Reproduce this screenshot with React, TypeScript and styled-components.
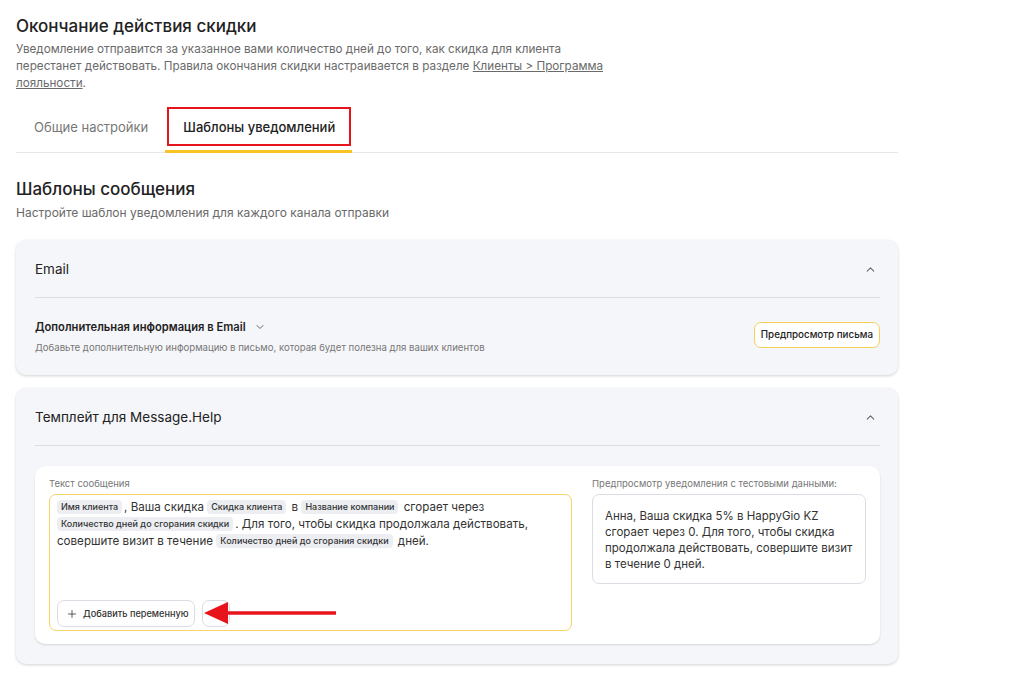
import React from "react";
import styled, { createGlobalStyle } from "styled-components";
import { ChevronUp, ChevronDown, Plus } from "lucide-react";

const Global = createGlobalStyle`
  html, body { margin: 0; padding: 0; background: #fff; }
  body { font-family: Inter, "Noto Sans", sans-serif; color: #222; -webkit-font-smoothing: antialiased; }
  * { box-sizing: border-box; }
`;

const Page = styled.div`
  width: 882px;
  margin-left: 16px;
  padding-top: 15px;
  padding-bottom: 13px;
`;

const Title = styled.h1`
  margin: 0;
  font-size: 17px;
  font-weight: 500;
  line-height: 22px;
  color: #222;
`;

const Desc = styled.p`
  margin: 4px 0 0;
  width: 600px;
  font-size: 11.7px;
  line-height: 17px;
  color: #6a6a6a;
  a { color: #6a6a6a; text-decoration: underline; }
`;

const Tabs = styled.div`
  display: flex;
  margin-top: 15px;
  border-bottom: 1px solid #e6e6ea;
`;

const Tab = styled.div<{ $active?: boolean }>`
  position: relative;
  height: 46px;
  padding: 0 17px 4px 18px;
  display: flex;
  align-items: center;
  font-size: 13px;
  font-weight: ${(p) => (p.$active ? 500 : 400)};
  color: ${(p) => (p.$active ? "#222" : "#777")};
  border-bottom: 3px solid ${(p) => (p.$active ? "#f7c325" : "transparent")};
  margin-bottom: -1px;
`;

const Highlight = styled.span`
  position: absolute;
  left: 2px;
  right: 1px;
  top: 0;
  height: 39px;
  border: 2px solid #e8141b;
`;

const SectionTitle = styled.h2`
  margin: 25px 0 0;
  font-size: 17px;
  font-weight: 500;
  line-height: 22px;
  color: #222;
`;

const SectionSub = styled.p`
  margin: 5px 0 0;
  font-size: 12px;
  line-height: 16px;
  color: #6a6a6a;
`;

const Card = styled.section<{ $first?: boolean }>`
  margin-top: ${(p) => (p.$first ? "19px" : "13px")};
  background: #f5f6f9;
  border-radius: 10px;
  box-shadow: 0 1px 3px rgba(0, 0, 0, 0.18);
  padding: 0 18px 0 19px;
`;

const CardHeader = styled.div`
  height: 58px;
  padding-top: 1px;
  display: flex;
  align-items: center;
  justify-content: space-between;
  border-bottom: 1px solid #dcdde4;
  font-size: 13.5px;
  color: #222;
  padding-right: 3px;
  svg { color: #666; }
`;

const EmailBody = styled.div`
  height: 77px;
  display: flex;
  align-items: center;
  justify-content: space-between;
`;

const InfoTitle = styled.div`
  display: flex;
  align-items: center;
  gap: 8px;
  font-size: 11.2px;
  font-weight: 600;
  color: #222;
  svg { color: #666; }
`;

const InfoSub = styled.div`
  margin-top: 8px;
  font-size: 9.6px;
  color: #777;
`;

const PreviewButton = styled.button`
  height: 26px;
  padding: 0 6px;
  margin-top: -4px;
  background: #fff;
  border: 1.5px solid #f6cf57;
  border-radius: 7px;
  font-family: inherit;
  font-size: 9.8px;
  font-weight: 500;
  color: #222;
`;

const MessageBody = styled.div`
  padding: 20px 0 20px;
`;

const Inner = styled.div`
  background: #fff;
  border-radius: 10px;
  box-shadow: 0 1px 2px rgba(0, 0, 0, 0.14);
  padding: 12px 14px 13px;
  display: grid;
  grid-template-columns: 523px 274px;
  column-gap: 20px;
`;

const Label = styled.div`
  font-size: 9.5px;
  line-height: 12px;
  color: #777;
  margin-bottom: 4px;
`;

const Editor = styled.div`
  position: relative;
  height: 137px;
  border: 1.5px solid #f6d46a;
  border-radius: 7px;
  padding: 4px 7px 3px;
  display: flex;
  flex-direction: column;
  justify-content: space-between;
`;

const EditorText = styled.div`
  font-size: 11.6px;
  line-height: 17px;
  color: #333;
`;

const Chip = styled.span`
  display: inline-block;
  background: #eceef2;
  border-radius: 4px;
  padding: 0 4px;
  margin-right: 2px;
  font-size: 9px;
  font-weight: 500;
  line-height: 14px;
  color: #333;
  vertical-align: 1px;
`;

const ButtonRow = styled.div`
  display: flex;
  gap: 7px;
`;

const AddButton = styled.button`
  height: 27px;
  padding: 0 5px 0 8px;
  display: flex;
  align-items: center;
  gap: 5px;
  background: #fff;
  border: 1px solid #dcdde4;
  border-radius: 7px;
  font-family: inherit;
  font-size: 9.2px;
  font-weight: 500;
  color: #333;
`;

const SmallButton = styled.button`
  width: 28px;
  height: 27px;
  background: #fff;
  border: 1px solid #dcdde4;
  border-radius: 7px;
`;

const Arrow = styled.svg`
  position: absolute;
  left: 152px;
  bottom: 5px;
`;

const PreviewBox = styled.div`
  height: 90px;
  border: 1px solid #dcdde4;
  border-radius: 7px;
  padding: 13px 6px 12px 12px;
  font-size: 11.5px;
  line-height: 16px;
  color: #333;
`;

export default function App() {
  return (
    <>
      <Global />
      <Page>
        <Title>Окончание действия скидки</Title>
        <Desc>
          Уведомление отправится за указанное вами количество дней до того, как скидка для клиента
          перестанет действовать. Правила окончания скидки настраивается в разделе{" "}
          <a>Клиенты &gt; Программа лояльности</a>.
        </Desc>
        <Tabs>
          <Tab>Общие настройки</Tab>
          <Tab $active>
            <Highlight />
            Шаблоны уведомлений
          </Tab>
        </Tabs>
        <SectionTitle>Шаблоны сообщения</SectionTitle>
        <SectionSub>Настройте шаблон уведомления для каждого канала отправки</SectionSub>

        <Card $first>
          <CardHeader>
            <span>Email</span>
            <ChevronUp size={13} strokeWidth={2} />
          </CardHeader>
          <EmailBody>
            <div>
              <InfoTitle>
                Дополнительная информация в Email <ChevronDown size={12} strokeWidth={2} />
              </InfoTitle>
              <InfoSub>Добавьте дополнительную информацию в письмо, которая будет полезна для ваших клиентов</InfoSub>
            </div>
            <PreviewButton>Предпросмотр письма</PreviewButton>
          </EmailBody>
        </Card>

        <Card>
          <CardHeader>
            <span>Темплейт для Message.Help</span>
            <ChevronUp size={13} strokeWidth={2} />
          </CardHeader>
          <MessageBody>
            <Inner>
              <div>
                <Label>Текст сообщения</Label>
                <Editor>
                  <EditorText>
                    <Chip>Имя клиента</Chip>, Ваша скидка <Chip>Скидка клиента</Chip> в{" "}
                    <Chip>Название компании</Chip> сгорает через{" "}
                    <br />
                    <Chip>Количество дней до сгорания скидки</Chip>. Для того, чтобы скидка продолжала
                    действовать, совершите визит в течение{" "}
                    <Chip>Количество дней до сгорания скидки</Chip> дней.
                  </EditorText>
                  <ButtonRow>
                    <AddButton>
                      <Plus size={12} strokeWidth={1.6} />
                      Добавить переменную
                    </AddButton>
                    <SmallButton />
                  </ButtonRow>
                  <Arrow width="136" height="24" viewBox="0 0 136 24">
                    <line x1="20" y1="12" x2="134" y2="12" stroke="#e8141b" strokeWidth="3.5" />
                    <polygon points="2,12 26,1 26,23" fill="#e8141b" />
                  </Arrow>
                </Editor>
              </div>
              <div>
                <Label>Предпросмотр уведомления с тестовыми данными:</Label>
                <PreviewBox>
                  Анна, Ваша скидка 5% в HappyGio KZ сгорает через 0. Для того, чтобы скидка
                  продолжала действовать, совершите визит в течение 0 дней.
                </PreviewBox>
              </div>
            </Inner>
          </MessageBody>
        </Card>
      </Page>
    </>
  );
}
